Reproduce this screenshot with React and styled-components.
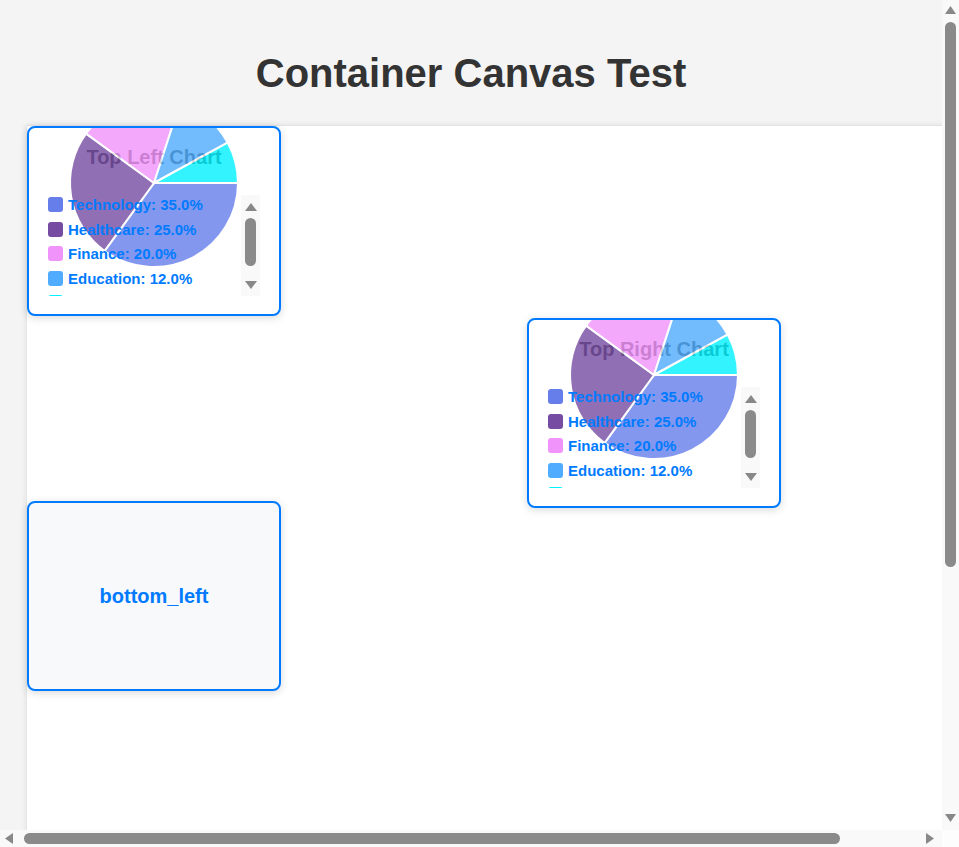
import React from 'react';
import styled, { createGlobalStyle } from 'styled-components';

/***************************************
  DATA
***************************************/

const sectors = [
  { name: 'Technology', value: 35, color: '#667eea' },
  { name: 'Healthcare', value: 25, color: '#764ba2' },
  { name: 'Finance', value: 20, color: '#f093fb' },
  { name: 'Education', value: 12, color: '#4facfe' },
  { name: 'Other', value: 8, color: '#00f2fe' },
];

/***************************************
  STYLES
***************************************/

const GlobalStyle = createGlobalStyle`
  html, body {
    margin: 0;
    padding: 0;
    overflow: hidden;
  }
  body {
    background: #f4f4f4;
    font-family: "Liberation Sans", Arial, Helvetica, sans-serif;
    color: #333;
  }
`;

const Viewport = styled.div`
  width: 100vw;
  height: 100vh;
  display: grid;
  grid-template-columns: 1fr 17px;
  grid-template-rows: 1fr 17px;
`;

const Scroller = styled.div`
  overflow: hidden;
  min-width: 0;
  min-height: 0;
`;

const Page = styled.div`
  padding: 0 26px;
`;

const Heading = styled.h1`
  margin: 0;
  padding: 50px 0 29px;
  font-size: 40px;
  line-height: 46px;
  font-weight: bold;
  text-align: center;
  color: #333;
`;

const Canvas = styled.div`
  position: relative;
  width: 1026px;
  height: 1097px;
  background: #fff;
  border-top: 1px solid #e2e2e2;
  border-left: 1px solid #e6e6e6;
  box-shadow: 0 0 6px rgba(0, 0, 0, 0.08);
`;

/// fake scrollbars ///

const ScrollBar = styled.div`
  display: flex;
  flex-direction: ${(p) => (p.horizontal ? 'row' : 'column')};
  align-items: center;
  padding: ${(p) => (p.horizontal ? '0 8px 0 5px' : '6px 0 8px')};
  background: #f9f9f9;
`;

const Arrow = styled.svg`
  flex: none;
  fill: #888;
`;

const Thumb = styled.div`
  flex: none;
  background: #8a8a8a;
  border-radius: 6px;
`;

const Corner = styled.div`
  background: #fdfdfd;
`;

/// cards ///

const Card = styled.div`
  position: absolute;
  left: ${(p) => p.x}px;
  top: ${(p) => p.y}px;
  width: 250px;
  height: 186px;
  border: 2px solid #007bff;
  border-radius: 8px;
  background: ${(p) => (p.plain ? '#f8f9fa' : '#fff')};
  box-shadow: 0 2px 8px rgba(0, 0, 0, 0.15);
  overflow: hidden;
  display: flex;
  flex-direction: column;
`;

const PlainLabel = styled.div`
  flex: 1;
  display: flex;
  align-items: center;
  justify-content: center;
  font-size: 20px;
  font-weight: bold;
  color: #007bff;
`;

const ChartBody = styled.div`
  position: relative;
  flex: 1;
  padding: 17px 19px 0;
`;

const ChartTitle = styled.div`
  position: relative;
  z-index: 0;
  font-size: 20px;
  line-height: 24px;
  font-weight: bold;
  text-align: center;
  color: #333;
`;

const PieLayer = styled.svg`
  position: absolute;
  left: 0;
  top: 0;
  z-index: 1;
  opacity: 0.8;
`;

const LegendBox = styled.div`
  position: relative;
  z-index: 2;
  display: flex;
  margin-top: 26px;
  height: 101px;
`;

const LegendList = styled.ul`
  flex: 1;
  list-style: none;
  margin: 0;
  padding: 1px 0 0;
  overflow: hidden;
`;

const LegendItem = styled.li`
  display: flex;
  align-items: center;
  height: 17px;
  margin-bottom: 7.5px;
  font-size: 15px;
  font-weight: bold;
  color: #007bff;
  white-space: nowrap;
`;

const Swatch = styled.span`
  flex: none;
  width: 15px;
  height: 15px;
  margin-right: 5px;
  border-radius: 3px;
  background: ${(p) => p.color};
`;

const LegendScroll = styled.div`
  flex: none;
  width: 19px;
  display: flex;
  flex-direction: column;
  align-items: center;
  padding: 8px 0 7px;
  background: #f9f9f9;
`;

const Spacer = styled.div`
  flex: 1;
`;

/***************************************
  COMPONENTS
***************************************/

const Tri = ({ dir, w = 11, h = 8 }) => {
  const pts = {
    up: `0,${h} ${w / 2},0 ${w},${h}`,
    down: `0,0 ${w},0 ${w / 2},${h}`,
    left: `${h},0 ${h},${w} 0,${w / 2}`,
    right: `0,0 ${h},${w / 2} 0,${w}`,
  }[dir];
  const horiz = dir === 'left' || dir === 'right';
  const vw = horiz ? h : w;
  const vh = horiz ? w : h;
  return (
    <Arrow width={vw} height={vh} viewBox={`0 0 ${vw} ${vh}`}>
      <polygon points={pts} />
    </Arrow>
  );
};

const Pie = ({ cx, cy, r }) => {
  const total = sectors.reduce((s, d) => s + d.value, 0);
  let start = 0;
  const point = (a) => [cx + r * Math.cos(a), cy + r * Math.sin(a)];
  return (
    <PieLayer width="250" height="186" viewBox="0 0 250 186">
      {sectors.map((d) => {
        const end = start + (d.value / total) * Math.PI * 2;
        const [x1, y1] = point(start);
        const [x2, y2] = point(end);
        const large = end - start > Math.PI ? 1 : 0;
        start = end;
        return (
          <path
            key={d.name}
            d={`M${cx},${cy} L${x1},${y1} A${r},${r} 0 ${large} 1 ${x2},${y2} Z`}
            fill={d.color}
            stroke="#fff"
            strokeWidth="2"
          />
        );
      })}
    </PieLayer>
  );
};

const ChartCard = ({ x, y, title }) => (
  <Card x={x} y={y}>
    <ChartBody>
      <ChartTitle>{title}</ChartTitle>
      <Pie cx={125} cy={55} r={84} />
      <LegendBox>
        <LegendList>
          {sectors.map((d) => (
            <LegendItem key={d.name}>
              <Swatch color={d.color} />
              {d.name}: {d.value.toFixed(1)}%
            </LegendItem>
          ))}
        </LegendList>
        <LegendScroll>
          <Tri dir="up" w={12} h={8} />
          <Thumb style={{ width: 11, height: 48, marginTop: 7 }} />
          <Spacer />
          <Tri dir="down" w={12} h={8} />
        </LegendScroll>
      </LegendBox>
    </ChartBody>
  </Card>
);

/***************************************
  MAIN
***************************************/

export default function App() {
  return (
    <>
      <GlobalStyle />
      <Viewport>
        <Scroller>
          <Page>
            <Heading>Container Canvas Test</Heading>
            <Canvas>
              <ChartCard x={0} y={0} title="Top Left Chart" />
              <ChartCard x={500} y={192} title="Top Right Chart" />
              <Card x={0} y={375} plain>
                <PlainLabel>bottom_left</PlainLabel>
              </Card>
            </Canvas>
          </Page>
        </Scroller>
        <ScrollBar>
          <Tri dir="up" />
          <Thumb style={{ width: 11, height: 545, marginTop: 8 }} />
          <Spacer />
          <Tri dir="down" />
        </ScrollBar>
        <ScrollBar horizontal>
          <Tri dir="left" />
          <Thumb style={{ width: 816, height: 11, marginLeft: 11 }} />
          <Spacer />
          <Tri dir="right" />
        </ScrollBar>
        <Corner />
      </Viewport>
    </>
  );
}
